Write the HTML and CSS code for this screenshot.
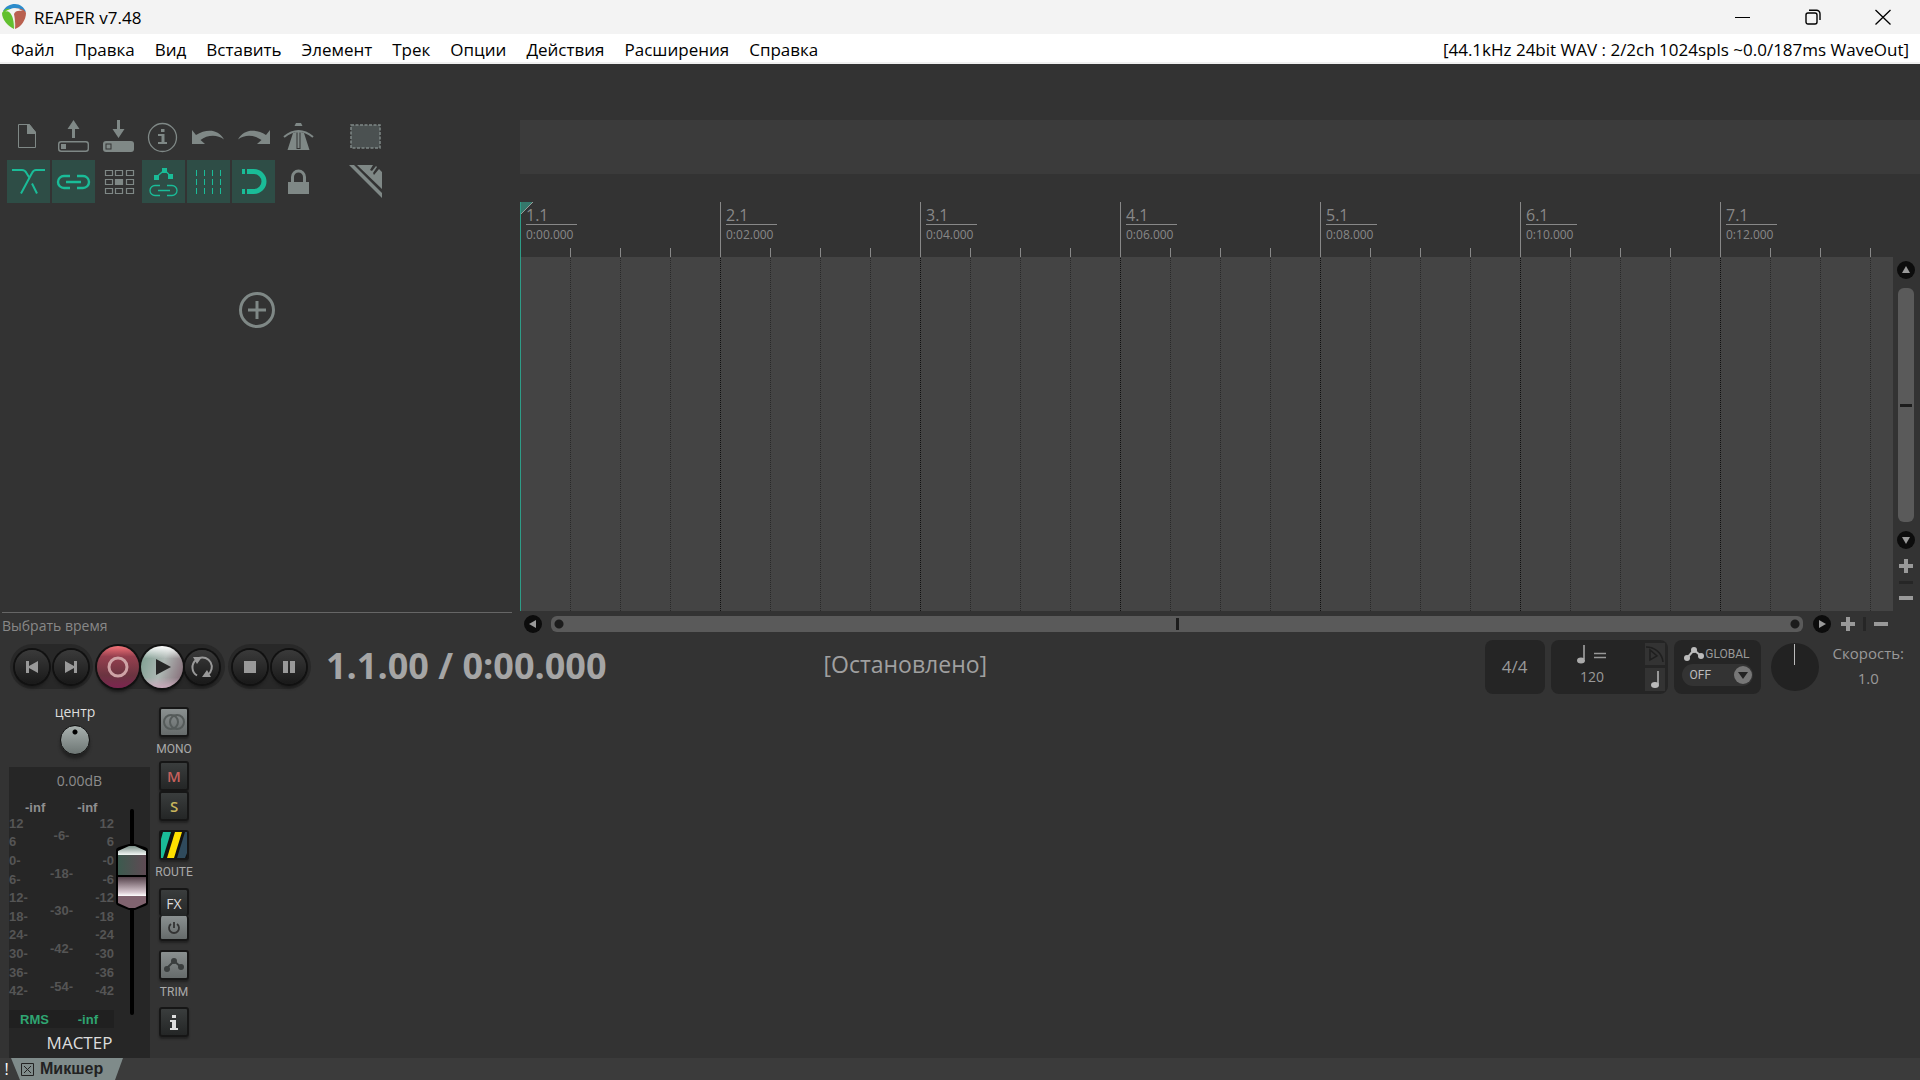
FILE: index.html
```html
<!DOCTYPE html>
<html lang="ru">
<head>
    <meta charset="UTF-8">
    <title>REAPER v7.48</title>
    <link rel="stylesheet" href="styles.css">
</head>
<body>
    <header class="titlebar">
        <svg class="logo" width="24" height="26" viewBox="0 0 24 26">
            <path d="M1 7C4 2 8 0 13 0c5 0 9 3 11 8l-4-2C16 3 9 3 4 8z" fill="#2d8ccb"/>
            <path d="M0 9c2-4 5-5 8-4 4 3 5 10 4 20C6 22 0 16 0 9z" fill="#62c02f"/>
            <path d="M12 5c6-1 11 0 12 4 0 7-5 14-11 16 1-9-1-13-5-17z" fill="#b9604f"/>
            <path d="M3 8c4-4 12-5 18-1-5-1-8 0-9 3 1 4 1 9 0 15 0-7-1-14-5-17-1-1-3-1-4 0z" fill="#f4f4f2"/>
        </svg>
        <h1>REAPER v7.48</h1>
        <div class="window-buttons">
            <button aria-label="Свернуть"><svg width="16" height="16"><path d="M0 8.500h15" stroke="#000"/></svg></button>
            <button aria-label="Развернуть"><svg width="16" height="16" fill="none" stroke="#000" stroke-width="1.4"><rect x="1" y="4" width="11" height="11" rx="2"/><path d="M4 1.200h7.500a3.500 3.500 0 0 1 3.500 3.500V11"/></svg></button>
            <button aria-label="Закрыть"><svg width="16" height="16"><path d="M.5 1l15 14.500M15.500 1L.5 15.500" stroke="#000" stroke-width="1.300"/></svg></button>
        </div>
    </header>

    <nav class="menubar">
        <button>Файл</button>
        <button>Правка</button>
        <button>Вид</button>
        <button>Вставить</button>
        <button>Элемент</button>
        <button>Трек</button>
        <button>Опции</button>
        <button>Действия</button>
        <button>Расширения</button>
        <button>Справка</button>
        <span class="audio-info">[44.1kHz 24bit WAV : 2/2ch 1024spls ~0.0/187ms WaveOut]</span>
    </nav>

    <main class="workspace">
        <section class="tracks">
            <div class="toolbar">
                <button aria-label="Новый проект"><svg viewBox="0 0 43 43"><path d="M11.500 9.500h11l6 8v15h-17z" fill="none" stroke="#7f8886"/><path d="M20 9h2l7 8v2h-9z" fill="#7f8886"/></svg></button>
                <button aria-label="Открыть"><svg viewBox="0 0 43 43" fill="#7f8886"><path d="M21.500 5l6 9H23v9h-3v-9h-4.500z"/><rect x="6.700" y="26.700" width="29.600" height="9.600" rx="2.500" fill="none" stroke="#7f8886" stroke-width="1.400"/><rect x="9" y="29" width="5" height="5"/></svg></button>
                <button aria-label="Сохранить"><svg viewBox="0 0 43 43" fill="#7f8886"><path d="M21.500 23l-6-9H20V5h3v9h4.500z"/><rect x="6" y="26" width="31" height="11" rx="3"/><rect x="9" y="29" width="5" height="5" stroke="#333"/></svg></button>
                <button aria-label="Настройки проекта"><svg viewBox="0 0 43 43" fill="#7f8886"><circle cx="20.500" cy="22.500" r="14" fill="none" stroke="#7f8886" stroke-width="1.300"/><path d="M19 14h3.500v3H19zM16 19h6.500v8H25v2h-9v-2h3.500v-6H16z"/></svg></button>
                <button aria-label="Отменить"><svg viewBox="0 0 43 43" fill="#7f8886"><path d="M5 15v14h13l-4.500-4C20 20 30 19 37 24.500 31 13.500 19 14 9 20z"/></svg></button>
                <button aria-label="Повторить"><svg viewBox="0 0 43 43" fill="#7f8886"><path d="M38 15v14H25l4.500-4C23 20 13 19 6 24.500 12 13.500 24 14 34 20z"/></svg></button>
                <button aria-label="Метроном"><svg viewBox="0 0 43 43" fill="#7f8886"><path d="M19 8h5l1.500 3h-8zM16 18l3-1h5l3 1 5.500 17h-22z"/><path d="M7 22q14.500-12 29 0" fill="none" stroke="#7f8886" stroke-width="2"/><path d="M19.500 17.500h4V34h-4z" fill="#333"/><path d="M20.500 17h2v16h-2z"/></svg></button>
                <button class="aside" aria-label="Выделение"><svg viewBox="0 0 43 43"><rect x="7" y="10" width="29" height="23" fill="#4b5151" stroke="#7f8886" stroke-width="1.500" stroke-dasharray="3 1.500"/></svg></button>

                <button class="active" aria-label="Кроссфейд"><svg viewBox="0 0 43 43" fill="none" stroke="#1abc98" stroke-width="2"><path d="M5 10h10q3 0 4.500 3l3 5M25 23.500l5 10M38 10H29q-2.500 0-4 3L14 33.500"/></svg></button>
                <button class="active" aria-label="Группировка"><svg viewBox="0 0 43 43" fill="none" stroke="#1abc98" stroke-width="2.400"><path d="M18 16h-6a6 6 0 0 0 0 12h6M25 16h6a6 6 0 0 1 0 12h-6M14 22h15"/></svg></button>
                <button aria-label="Риппл"><svg viewBox="0 0 43 43" fill="none" stroke="#7f8886" stroke-width="1.200"><path d="M8.500 10.500h7v5h-7zM18.500 10.500h7v5h-7zM29.500 10.500h7v5h-7zM8.500 19.500h7v5h-7zM29.500 19.500h7v5h-7zM8.500 28.500h7v5h-7zM18.500 28.500h7v5h-7zM29.500 28.500h7v5h-7z"/><path d="M18.500 19.500h7v5h-7z" fill="#7f8886"/></svg></button>
                <button class="active" aria-label="Огибающие"><svg viewBox="0 0 43 43" fill="#1abc98"><path d="M12 15h5v5h-5zM20 8h5v5h-5zM26 14h5v5h-5z"/><path d="M14.500 17l8-7 6 6M18 25.500h-5a5 5 0 0 0 0 10h5M25 25.500h5a5 5 0 0 1 0 10h-5M16 30.500h12" fill="none" stroke="#1abc98" stroke-width="1.300"/></svg></button>
                <button class="active" aria-label="Сетка"><svg viewBox="0 0 43 43"><path d="M9.500 10v24M17.500 10v24M25.500 10v24M33.500 10v24" stroke="#1abc98" stroke-dasharray="6 3"/></svg></button>
                <button class="active" aria-label="Привязка"><svg viewBox="0 0 43 43" fill="#1abc98"><path d="M10 9h3v5h-3zM10 29h3v5h-3z"/><path d="M15 11.500h7a10 10 0 0 1 0 20h-7" fill="none" stroke="#1abc98" stroke-width="5"/></svg></button>
                <button aria-label="Блокировка"><svg viewBox="0 0 43 43"><path d="M11 22h21v12H11z" fill="#7f8886"/><path d="M15.500 23v-6a6 6 0 0 1 12 0v6" fill="none" stroke="#7f8886" stroke-width="3"/></svg></button>
                <button class="aside" aria-label="Линейка"><svg viewBox="0 0 43 43" fill="#7f8886"><path d="M5 5h5l28 28v5zM13 5h16l-3 5 2 1 4-5 1 1-4 6 1 2 5-6 3 3v17z"/></svg></button>
            </div>
            <button class="add-track" aria-label="Добавить трек"><svg width="38" height="38" viewBox="0 0 38 38" fill="none" stroke="#7f8886"><circle cx="19" cy="19" r="16.500" stroke-width="3"/><path d="M19 10v18M10 19h18" stroke-width="3"/></svg></button>
            <p class="hint">Выбрать время</p>
        </section>

        <section class="arrange">
            <div class="region-lane"></div>
            <ol class="ruler">
                <li><b>1.1</b><span>0:00.000</span></li>
                <li><b>2.1</b><span>0:02.000</span></li>
                <li><b>3.1</b><span>0:04.000</span></li>
                <li><b>4.1</b><span>0:06.000</span></li>
                <li><b>5.1</b><span>0:08.000</span></li>
                <li><b>6.1</b><span>0:10.000</span></li>
                <li><b>7.1</b><span>0:12.000</span></li>
            </ol>
            <div class="timeline"></div>
            <div class="vscroll">
                <button class="round" aria-label="Вверх"><svg viewBox="0 0 18 18"><path d="M9 5l4 7H5z"/></svg></button>
                <div class="thumb"></div>
                <button class="round" aria-label="Вниз"><svg viewBox="0 0 18 18"><path d="M9 13l4-7H5z"/></svg></button>
                <button class="zoom" aria-label="Увеличить"><svg viewBox="0 0 14 14"><path d="M5 0h4v5h5v4H9v5H5V9H0V5h5z"/></svg></button>
                <i class="split"></i>
                <button class="zoom" aria-label="Уменьшить"><svg viewBox="0 0 14 14"><path d="M0 5h14v4H0z"/></svg></button>
            </div>
            <div class="hscroll">
                <button class="round" aria-label="Влево"><svg viewBox="0 0 18 18"><path d="M5 9l7-4v8z"/></svg></button>
                <div class="thumb"></div>
                <button class="round" aria-label="Вправо"><svg viewBox="0 0 18 18"><path d="M13 9L6 5v8z"/></svg></button>
                <button class="zoom" aria-label="Увеличить"><svg viewBox="0 0 14 14"><path d="M5 0h4v5h5v4H9v5H5V9H0V5h5z"/></svg></button>
                <i class="split"></i>
                <button class="zoom" aria-label="Уменьшить"><svg viewBox="0 0 14 14"><path d="M0 5h14v4H0z"/></svg></button>
            </div>
        </section>
    </main>

    <section class="transport">
        <div class="pill">
            <button class="knob" aria-label="В начало"><svg viewBox="0 0 34 34"><path d="M11 11h3v5l9-5v12l-9-5v5h-3z"/></svg></button>
            <button class="knob" aria-label="В конец"><svg viewBox="0 0 34 34"><path d="M23 11h-3v5l-9-5v12l9-5v5h3z"/></svg></button>
        </div>
        <div class="pill main">
            <button class="knob big record" aria-label="Запись"><svg viewBox="0 0 42 42"><circle cx="21" cy="21" r="9" fill="none" stroke="#cfa3a6" stroke-width="3"/></svg></button>
            <button class="knob big play" aria-label="Воспроизвести"><svg viewBox="0 0 42 42"><path d="M15 13l15 8-15 8z" fill="#262626"/></svg></button>
            <button class="knob" aria-label="Повтор"><svg viewBox="0 0 34 34"><path d="M12 25.500A9.500 9.500 0 0 1 11 10M14 8a9.500 9.500 0 0 1 9 16.500" fill="none" stroke="#999" stroke-width="2"/><path d="M8 7h9l-5 7zM26 27h-9l5-7z"/></svg></button>
        </div>
        <div class="pill">
            <button class="knob" aria-label="Стоп"><svg viewBox="0 0 34 34"><path d="M11 11h12v12H11z"/></svg></button>
            <button class="knob" aria-label="Пауза"><svg viewBox="0 0 34 34"><path d="M11 11h5v12h-5zM18 11h5v12h-5z"/></svg></button>
        </div>
        <output class="time">1.1.00 / 0:00.000</output>
        <output class="state">[Остановлено]</output>
        <div class="settings">
            <button class="box signature">4/4</button>
            <div class="box tempo">
                <button class="bpm">
                    <svg width="30" height="19" viewBox="0 0 30 19"><path d="M7 0v14" stroke="#aaa" stroke-width="1.500"/><ellipse cx="4" cy="15.500" rx="4" ry="3" fill="#aaa"/><path d="M17 8.500h12M17 12.500h12" stroke="#999" stroke-width="1.500"/></svg>
                    <span>120</span>
                </button>
                <div class="tempo-side">
                    <button aria-label="Тап"><svg width="20" height="22" viewBox="0 0 20 22" fill="none" stroke="#1f1f1f" stroke-width="1.500"><path d="M1 4c9 0 16 6 17 15M5 7v10l7-4z"/></svg></button>
                    <button aria-label="Доля"><svg width="20" height="22" viewBox="0 0 20 22"><path d="M13 3v13" stroke="#bbb" stroke-width="1.500"/><ellipse cx="10" cy="17" rx="4" ry="3" fill="#bbb"/></svg></button>
                </div>
            </div>
            <div class="box global">
                <div class="global-head"><svg width="20" height="14" viewBox="0 0 20 14"><path d="M3 11l7-8 7 6" fill="none" stroke="#bbb" stroke-width="2"/><circle cx="3" cy="11" r="3" fill="#bbb"/><circle cx="10" cy="3" r="3" fill="#bbb"/><circle cx="17" cy="9" r="3" fill="#bbb"/></svg>GLOBAL</div>
                <button class="global-mode">OFF <svg width="18" height="18" viewBox="0 0 18 18"><circle cx="9" cy="9" r="9" fill="#777"/><path d="M4 6h10l-5 7z" fill="#222"/></svg></button>
            </div>
            <button class="rate-knob" aria-label="Скорость"></button>
            <div class="rate"><span>Скорость:</span><span>1.0</span></div>
        </div>
    </section>

    <section class="mixer">
        <div class="master">
            <div class="pan">
                <span>центр</span>
                <button class="pan-knob" aria-label="Панорама"></button>
            </div>
            <div class="meter">
                <div class="volume">0.00dB</div>
                <div class="peaks"><span>-inf</span><span>-inf</span></div>
                <div class="scales">
                    <ul>
                        <li>12</li><li>6</li><li>0-</li><li>6-</li><li>12-</li><li>18-</li><li>24-</li><li>30-</li><li>36-</li><li>42-</li>
                    </ul>
                    <ul class="inner">
                        <li>-6-</li><li>-18-</li><li>-30-</li><li>-42-</li><li>-54-</li>
                    </ul>
                    <ul class="right">
                        <li>12</li><li>6</li><li>-0</li><li>-6</li><li>-12</li><li>-18</li><li>-24</li><li>-30</li><li>-36</li><li>-42</li>
                    </ul>
                </div>
                <div class="rms"><span>RMS</span><span>-inf</span></div>
                <div class="fader">
                    <svg width="36" height="206" viewBox="0 0 36 206">
                        <defs>
                            <linearGradient id="capTop" x2="0" y2="1"><stop offset="0" stop-color="#7d918a"/><stop offset="1" stop-color="#f4f8f6"/></linearGradient>
                            <linearGradient id="capMid"><stop offset="0" stop-color="#3c5a4e"/><stop offset="1" stop-color="#5f4a54"/></linearGradient>
                            <linearGradient id="capLow" x2="0" y2="1"><stop offset="0" stop-color="#54414a"/><stop offset=".8" stop-color="#d8c8d0"/><stop offset="1" stop-color="#fff"/></linearGradient>
                        </defs>
                        <path d="M18 2v202" stroke="#000" stroke-width="4" stroke-linecap="round"/>
                        <path d="M2 41q0-2 3-3l10-3h6l10 3q3 1 3 3v53q0 2-3 3l-10 4h-6L5 97q-3-1-3-3z" fill="#000"/>
                        <path d="M4 42l11-5h6l11 5v4H4z" fill="url(#capTop)"/>
                        <path d="M4 46h28v20H4z" fill="url(#capMid)"/>
                        <path d="M4 68h28v19H4z" fill="url(#capLow)"/>
                        <path d="M4 87h28v7l-11 5h-6L4 94z" fill="#80636f"/>
                    </svg>
                </div>
                <div class="name">МАСТЕР</div>
            </div>
        </div>
        <div class="master-buttons">
            <button class="sq light" aria-label="Моно"><svg width="24" height="18" viewBox="0 0 24 18" fill="none" stroke="#555b5a" stroke-width="2"><circle cx="9" cy="9" r="7"/><circle cx="15" cy="9" r="7"/></svg></button>
            <span>MONO</span>
            <button class="sq mute">M</button>
            <button class="sq solo">S</button>
            <button class="sq route" aria-label="Маршрутизация"><svg width="26" height="26" viewBox="0 0 26 26"><path d="M2 0h8L2 26H0V7z" fill="#1abc98"/><path d="M14 0h7l-8 26H6z" fill="#ffe000"/><path d="M24 0h2v21l-2 5h-8z" fill="#2f4a5c"/></svg></button>
            <span>ROUTE</span>
            <button class="sq fx">FX</button>
            <button class="sq light power" aria-label="Обход FX"><svg width="14" height="14" viewBox="0 0 14 14" fill="none" stroke="#333" stroke-width="1.800"><path d="M4 3a5 5 0 1 0 6 0M7 1v6"/></svg></button>
            <button class="sq light trim" aria-label="Огибающая"><svg width="20" height="14" viewBox="0 0 20 14"><path d="M3 10l7-7 7 6" fill="none" stroke="#3a3e3e" stroke-width="2"/><circle cx="3" cy="11" r="3" fill="#3a3e3e"/><circle cx="10" cy="3" r="3" fill="#3a3e3e"/><circle cx="17" cy="9" r="3" fill="#3a3e3e"/></svg></button>
            <span>TRIM</span>
            <button class="sq info" aria-label="Информация"><svg width="8" height="15" viewBox="0 0 8 15" fill="#ddd"><path d="M2 0h4v3H2zM0 5h6v8h2v2H0v-2h2V7H0z"/></svg></button>
        </div>
    </section>

    <footer class="docker">
        <button class="bang">!</button>
        <button class="tab"><svg width="13" height="13" viewBox="0 0 13 13" fill="none" stroke="#222"><path d="M.5.500h12v12H.500zM3 3l7 7M10 3l-7 7"/></svg>Микшер</button>
    </footer>
</body>
</html>
```
FILE: styles.css
```css
* {
    box-sizing: border-box;
}

body {
    margin: 0;
    min-height: 100vh;
    display: flex;
    flex-direction: column;
    background: #333;
    color: #999;
    font-family: "Open Sans", "Noto Sans", sans-serif;
    font-size: 14px;
}

button {
    border: none;
    padding: 0;
    margin: 0;
    background: none;
    color: inherit;
    font: inherit;
}

svg {
    display: block;
}

ol, ul {
    list-style: none;
    margin: 0;
    padding: 0;
}

/* title and menu */
.titlebar {
    display: flex;
    align-items: center;
    height: 34px;
    padding: 0 2px;
    background: #f3f3f3;
    color: #000;
}

.titlebar h1 {
    margin: 0 0 0 8px;
    font-size: 17px;
    font-weight: 400;
}

.window-buttons {
    display: flex;
    margin-left: auto;
}

.window-buttons button {
    width: 70px;
    height: 34px;
    display: grid;
    place-items: center;
}

.menubar {
    display: flex;
    align-items: center;
    gap: 20px;
    height: 30px;
    padding: 2px 11px 0;
    background: #fff;
    border-bottom: 2px solid #f0f0f0;
    color: #000;
    font-size: 17px;
}

.audio-info {
    margin-left: auto;
}

/* track panel */
.workspace {
    flex: 1;
    display: grid;
    grid-template-columns: 512px 1fr;
    gap: 8px;
}

.tracks {
    display: flex;
    flex-direction: column;
    padding: 51px 0 0 2px;
}

.toolbar {
    display: grid;
    grid-template-columns: repeat(7, 43px) 20px 43px;
    gap: 2px;
    padding-left: 5px;
}

.toolbar button {
    height: 43px;
}

.toolbar .aside {
    grid-column: 9;
}

.toolbar .active {
    background: #2e4d46;
}

.add-track {
    align-self: center;
    margin-top: 88px;
}

.hint {
    margin: auto 0 0;
    height: 25px;
    line-height: 25px;
    border-top: 1px solid #666;
    font-size: 14px;
    color: #888;
}

/* arrange view */
.arrange {
    display: grid;
    grid-template-columns: 1fr 27px;
    grid-template-rows: 54px 28px 55px 1fr 26px;
    padding-top: 56px;
}

.region-lane {
    grid-column: 1 / 3;
    background: #3b3b3b;
}

.ruler {
    grid-row: 3;
    display: flex;
    overflow: hidden;
    min-width: 0;
    background: repeating-linear-gradient(to right, #888 0 1px, transparent 1px 50px) bottom / 100% 9px no-repeat;
}

.ruler li {
    flex: 0 0 200px;
    padding: 2px 0 0 5px;
    border-left: 1px solid #888;
}

.ruler li:first-child {
    border-color: #2e9c87;
    background: linear-gradient(135deg, #35786b 8px, #999 8px 9px, transparent 9px);
}

.ruler b {
    display: block;
    width: 51px;
    height: 21px;
    line-height: 23px;
    border-bottom: 1px solid #888;
    font-size: 16px;
    font-weight: 400;
    color: #888;
}

.ruler span {
    display: block;
    line-height: 20px;
    font-size: 12px;
    color: #888;
}

.timeline {
    grid-row: 4;
    border-left: 1px solid #2e9c87;
    background:
        repeating-linear-gradient(to bottom, #444 0 1px, transparent 1px 2px),
        repeating-linear-gradient(to right, #111 0 1px, transparent 1px 200px),
        repeating-linear-gradient(to right, #292929 0 1px, #444 1px 50px);
    background-origin: border-box;
}

.vscroll {
    grid-row: 4;
    display: flex;
    flex-direction: column;
    align-items: center;
    padding: 4px 1px 6px 0;
}

.hscroll {
    grid-row: 5;
    grid-column: 1 / 3;
    display: flex;
    align-items: center;
    padding: 0 32px 0 4px;
}

.round {
    width: 18px;
    height: 18px;
    border-radius: 50%;
    background: #0c0c0c;
    fill: #999;
}

.thumb {
    flex: 1;
    background: #5a5a5a;
    border-radius: 6px;
}

.vscroll .thumb {
    width: 16px;
    margin: 9px 0;
    background: linear-gradient(#1c1c1c, #1c1c1c) center / 12px 3px no-repeat #5a5a5a;
}

.hscroll .thumb {
    height: 16px;
    margin: 0 10px 0 9px;
    background:
        radial-gradient(circle at 8px 8px, #1c1c1c 4px, transparent 5px),
        radial-gradient(circle at calc(100% - 8px) 8px, #1c1c1c 4px, transparent 5px),
        linear-gradient(#1c1c1c, #1c1c1c) center / 3px 12px no-repeat #5a5a5a;
}

.zoom {
    width: 14px;
    height: 14px;
    fill: #999;
}

.split {
    background: #262626;
}

.vscroll .split {
    width: 14px;
    height: 3px;
}

.hscroll .split {
    width: 3px;
    height: 14px;
}

.vscroll .zoom {
    margin: 10px 0 8px;
}

.vscroll .zoom:last-child {
    margin: 7px 0 0;
}

.hscroll .zoom {
    margin: 0 8px 0 10px;
}

.hscroll .zoom:last-child {
    margin: 0 0 0 8px;
}

/* transport */
.transport {
    display: flex;
    align-items: center;
    height: 63px;
    padding: 0 16px 4px 10px;
}

.pill {
    display: flex;
    align-items: center;
    gap: 5px;
    height: 45px;
    padding: 0 5px;
    border-radius: 23px;
    background: #282828;
}

.pill.main {
    gap: 2px;
    margin: 0 3px 0 4px;
    padding: 0 6px 0 0;
}

.knob {
    width: 34px;
    height: 34px;
    border-radius: 50%;
    background: linear-gradient(#3a3a3a, #191919);
    box-shadow: 0 0 0 2px #111, 0 4px 3px #1b1b1b;
    fill: #999;
}

.knob.big {
    width: 42px;
    height: 42px;
}

.knob.record {
    background: linear-gradient(#f57378, #96404f 25%, #6b3440 70%, #7c2450);
}

.knob.play {
    background: linear-gradient(#fff, transparent 30%, transparent 75%, #c9a9bb), linear-gradient(110deg, #789c8d, #aeb8b4 50%, #806370);
}

.time {
    margin-left: 15px;
    padding-bottom: 2px;
    font-size: 36px;
    font-weight: 700;
    line-height: 44px;
    color: #a5a5a5;
}

.state {
    margin: 0 auto 0 217px;
    padding-bottom: 6px;
    font-size: 23px;
    color: #a0a0a0;
}

.settings {
    display: flex;
    align-items: center;
    gap: 6px;
}

.box {
    height: 54px;
    border-radius: 8px;
    background: #252525;
}

.signature {
    width: 60px;
    font-size: 17px;
}

.tempo {
    display: flex;
    width: 117px;
    padding: 3px;
}

.bpm {
    flex: 1;
    display: flex;
    flex-direction: column;
    align-items: center;
    line-height: 26px;
    padding: 2px 14px 0 0;
    font-size: 14px;
}

.tempo-side {
    display: grid;
    gap: 3px;
}

.tempo-side button {
    background: #333;
}

.global {
    width: 87px;
    padding: 5px 8px;
    font-family: "Liberation Sans Narrow", Roboto, sans-serif;
    font-size: 12px;
}

.global-head {
    display: flex;
    align-items: center;
    justify-content: space-between;
    height: 19px;
    padding: 0 3px 0 2px;
}

.global-mode {
    display: flex;
    align-items: center;
    justify-content: space-between;
    width: 71px;
    height: 22px;
    padding: 0 1px 0 8px;
    border-radius: 11px;
    background: #333;
    color: #bbb;
}

.rate-knob {
    width: 48px;
    height: 48px;
    margin: 0 8px 0 4px;
    border-radius: 50%;
    background: linear-gradient(#bbb, #bbb) 50% 1px / 1px 21px no-repeat #222;
}

.rate {
    display: flex;
    flex-direction: column;
    align-items: center;
    padding-bottom: 2px;
    line-height: 25px;
    font-size: 15px;
}

/* mixer */
.mixer {
    display: flex;
    align-items: flex-start;
    gap: 9px;
    padding-left: 9px;
}

.master {
    width: 141px;
}

.pan {
    display: flex;
    flex-direction: column;
    align-items: center;
    height: 67px;
    padding: 2px 9px 0 0;
    line-height: 20px;
    font-size: 14px;
    color: #ddd;
}

.pan-knob {
    width: 30px;
    height: 30px;
    margin-top: 3px;
    border: 1px solid #111;
    border-radius: 50%;
    background: radial-gradient(circle at 50% 6px, #000 2px, transparent 3px), linear-gradient(#a9b1af, #6d7674);
    box-shadow: 0 4px 3px #222;
}

.meter {
    display: grid;
    grid-template-columns: 105px 36px;
    grid-template-rows: 30px 17px 196px 18px 30px;
    background: #262626;
    font-family: "Liberation Sans", Arial, sans-serif;
    font-size: 13px;
    font-weight: 700;
}

.volume {
    grid-column: 1 / 3;
    text-align: center;
    line-height: 28px;
    font-family: "Open Sans", sans-serif;
    font-size: 14px;
    font-weight: 400;
    color: #8c8c8c;
}

.peaks {
    display: flex;
    gap: 32px;
    padding-left: 16px;
    line-height: 21px;
    color: #8f8f8f;
}

.scales {
    display: grid;
    grid-template-columns: 1fr 1fr 1fr;
    grid-template-rows: 186px;
    grid-column: 1;
    color: #555;
}

.scales ul {
    display: grid;
    grid-auto-rows: 1fr;
    align-items: center;
}

.scales .inner {
    text-align: center;
    height: 188px;
    margin-top: 3px;
}

.scales .right {
    text-align: right;
}

.rms {
    display: flex;
    justify-content: space-between;
    grid-column: 1;
    grid-row: 4;
    padding: 0 16px 0 11px;
    line-height: 20px;
    background: #202020;
    color: #2fa572;
}

.fader {
    grid-column: 2;
    grid-row: 2 / 5;
    padding-top: 12px;
}

.name {
    grid-column: 1 / 3;
    text-align: center;
    line-height: 30px;
    font-family: "Open Sans", sans-serif;
    font-size: 17px;
    font-weight: 400;
    color: #ddd;
}

.master-buttons {
    display: flex;
    flex-direction: column;
    align-items: center;
    width: 30px;
    padding-top: 7px;
    font-family: "Liberation Sans Narrow", Roboto, sans-serif;
    font-size: 12px;
    color: #aaa;
}

.master-buttons span {
    line-height: 24px;
}

.sq {
    display: grid;
    place-items: center;
    width: 30px;
    height: 30px;
    border: 2px solid #161616;
    border-radius: 3px;
    background: linear-gradient(#3a3d3d, #242626);
    box-shadow: 0 2px 2px #222;
}

.light {
    background: linear-gradient(#8a9090, #666b6b);
}

.mute, .solo {
    font-family: "Open Sans", sans-serif;
    font-size: 15px;
    font-weight: 600;
}

.mute {
    color: #c4605c;
}

.solo {
    color: #c9b65c;
}

.route {
    margin-top: 9px;
    background: #111;
}

.fx {
    height: 28px;
    margin-top: 4px;
    border-bottom: none;
    font-family: "Open Sans", sans-serif;
    font-size: 14px;
    color: #ddd;
}

.power {
    height: 25px;
    border-top: none;
}

.trim {
    margin-top: 9px;
}

.info {
    margin-top: 3px;
}

/* docker */
.docker {
    display: flex;
    height: 22px;
    background: #3b3b3b;
}

.bang {
    width: 13px;
    margin-right: -2px;
    font-size: 16px;
    line-height: 18px;
    color: #fff;
}

.tab {
    display: flex;
    align-items: center;
    gap: 6px;
    width: 112px;
    padding-left: 10px;
    clip-path: polygon(0 0, 100% 0, 104px 100%, 9px 100%);
    background: #7f8b8a;
    color: #222;
    font-family: "Liberation Sans", Arial, sans-serif;
    font-size: 16px;
    font-weight: 700;
}
```
